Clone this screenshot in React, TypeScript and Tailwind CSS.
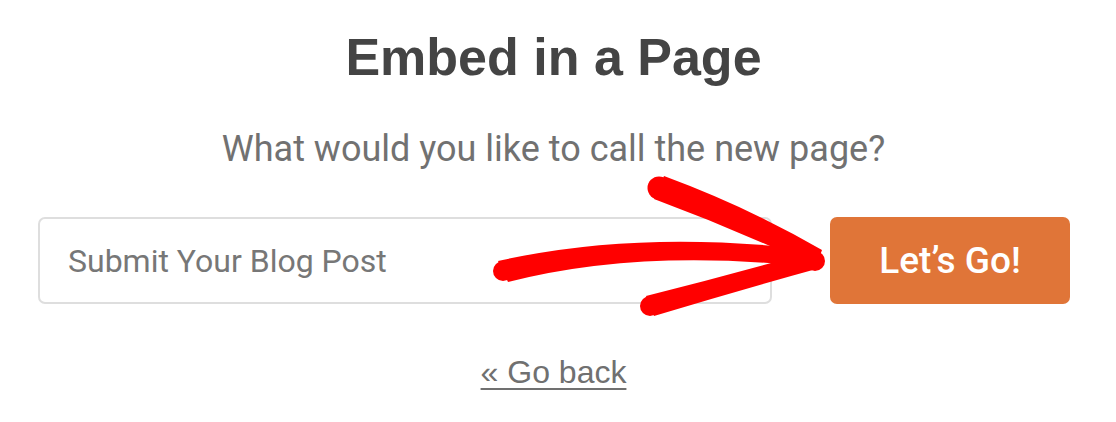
const Arrow = () => (
  <svg
    className="pointer-events-none absolute left-0 top-0"
    width="1116"
    height="422"
    viewBox="0 0 1116 422"
    fill="#ff0000"
  >
    {/* shaft */}
    <path d="M498 261 Q 640 229 812 250 L812 267 Q 640 248 508 282 Z" />
    <circle cx="503" cy="271" r="10" />
    {/* upper head */}
    <path d="M664 176 Q 748 207 822 250 L816 267 Q 735 229 654 199 Z" />
    <circle cx="659" cy="188" r="11.5" />
    {/* lower head */}
    <path d="M646 296 Q 730 275 814 251 L820 268 Q 740 290 654 316 Z" />
    <circle cx="650" cy="306" r="10" />
    <circle cx="815" cy="261" r="10" />
  </svg>
);

export default function App() {
  return (
    <div className="relative h-[422px] w-[1116px] bg-white font-['Roboto','Liberation_Sans',sans-serif]">
      <div className="flex flex-col items-center pr-[9px] pt-[31px]">
        <h1 className="font-['Liberation_Sans','Roboto',sans-serif] text-[52px] font-bold leading-[52px] text-[#444444]">
          Embed in a Page
        </h1>
        <p className="mt-[48px] text-[36px] leading-[36px] text-[#717171]">
          What would you like to call the new page?
        </p>
      </div>

      <div className="mt-[50px] flex items-stretch gap-[58px] pl-[38px]">
        <input
          type="text"
          placeholder="Submit Your Blog Post"
          className="h-[87px] w-[734px] rounded-[7px] border-2 border-[#dedede] bg-white pl-[28px] text-[32px] text-[#444] outline-none placeholder:text-[#777777]"
        />
        <button
          type="button"
          className="h-[87px] w-[240px] rounded-[7px] bg-[#e07538] text-[37px] font-medium text-white"
        >
          Let’s Go!
        </button>
      </div>

      <div className="mt-[52px] flex justify-center pr-[9px]">
        <a
          href="#"
          className="font-['Liberation_Sans','Roboto',sans-serif] text-[32px] leading-[32px] text-[#707070] underline decoration-[2px] underline-offset-[5px]"
        >
          « Go back
        </a>
      </div>

      <Arrow />
    </div>
  );
}
